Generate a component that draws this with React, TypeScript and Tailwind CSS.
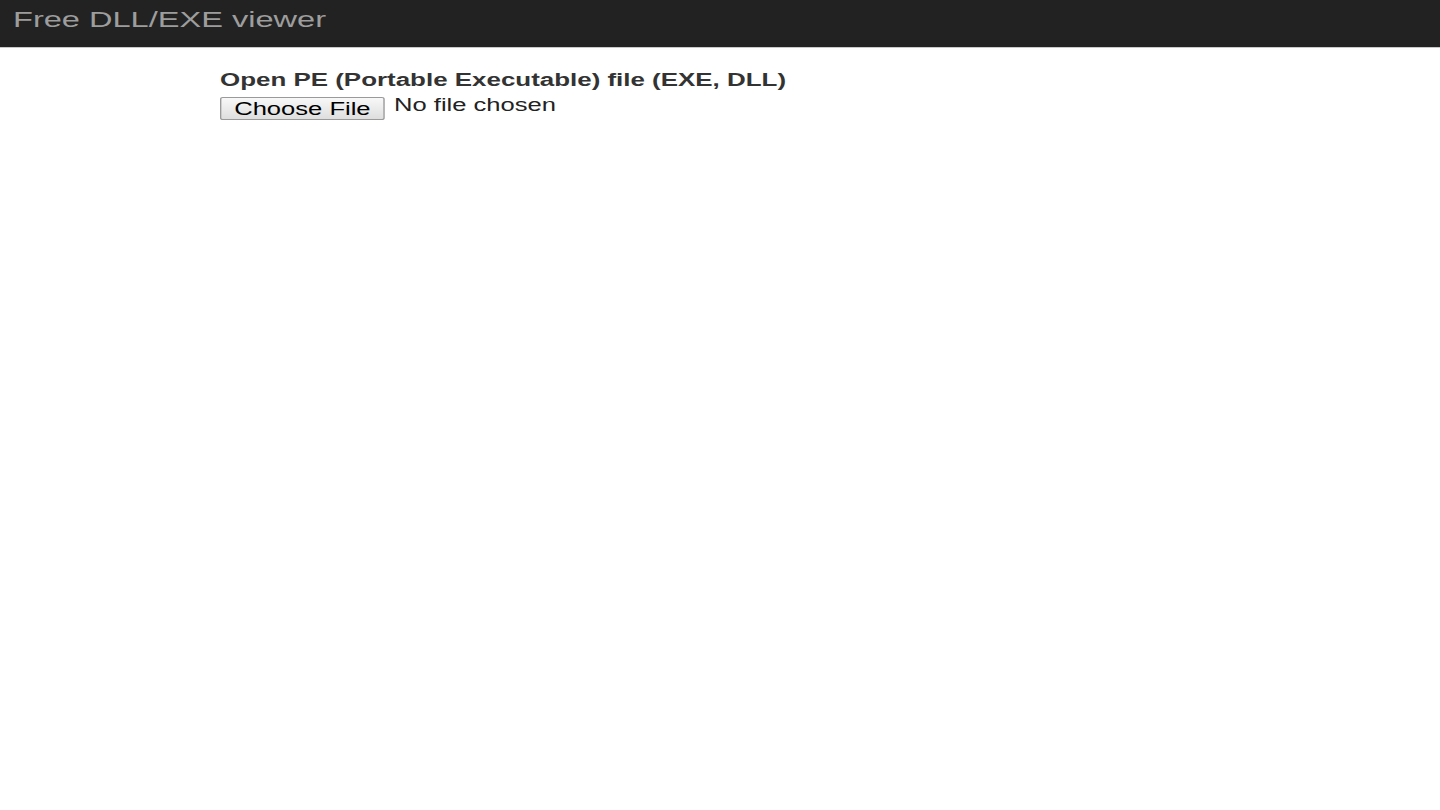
export default function App() {
  return (
    <div className="min-h-[810px] bg-white overflow-hidden" style={{ fontFamily: '"Liberation Sans", Arial, sans-serif' }}>
      <header className="h-[48px] bg-[#222222] border-b border-[#c8c8c8] flex items-center pl-[13px]">
        <span className="inline-block origin-left scale-x-[1.48] text-[22px] leading-none text-[#9d9d9d] -mt-[8px]">
          Free DLL/EXE viewer
        </span>
      </header>
      <main className="ml-[220px] pt-[21px] flex flex-col items-start">
        <h1 className="origin-left scale-x-[1.44] text-[18px] leading-[22px] font-bold text-[#333333]">
          Open PE (Portable Executable) file (EXE, DLL)
        </h1>
        <div className="origin-left scale-x-[1.42] flex items-start mt-[6px]">
          <button className="h-[23px] px-[9px] border border-[#9a9a9a] rounded-[2px] bg-gradient-to-b from-[#f8f8f8] to-[#dedede] text-[18px] leading-[20px] text-black">
            Choose File
          </button>
          <span className="ml-[6.5px] -mt-[3px] text-[18px] leading-[22px] text-[#222222]">No file chosen</span>
        </div>
      </main>
    </div>
  );
}
